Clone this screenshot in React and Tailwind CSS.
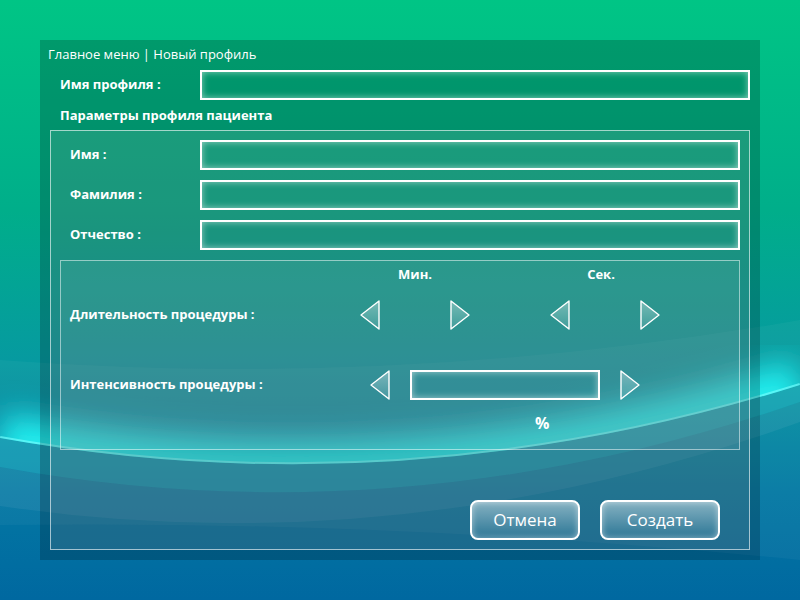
import React from "react";

const font = { fontFamily: '"Open Sans", "Noto Sans", sans-serif' };

function Arrow({ dir = "left" }) {
  const pts = dir === "left" ? "19,1 1,15 19,29" : "1,1 19,15 1,29";
  return (
    <svg width="20" height="30" viewBox="0 0 20 30" className="shrink-0">
      <defs>
        <linearGradient id={`ag-${dir}`} x1="0" y1="0" x2="0" y2="1">
          <stop offset="0" stopColor="#fff" stopOpacity="0.35" />
          <stop offset="1" stopColor="#fff" stopOpacity="0.08" />
        </linearGradient>
      </defs>
      <polygon
        points={pts}
        fill={`url(#ag-${dir})`}
        stroke="#fff"
        strokeWidth="1.4"
        strokeLinejoin="round"
      />
    </svg>
  );
}

function Field({ className = "" }) {
  return (
    <div
      className={`h-[30px] border-2 border-white shadow-[inset_0_0_7px_rgba(255,255,255,0.55)] ${className}`}
    />
  );
}

// wallpaper swoosh
function Background() {
  const edge = "M0,438 Q400,510 800,385";
  return (
    <svg className="absolute inset-0" width="800" height="600" viewBox="0 0 800 600">
      <defs>
        <linearGradient id="bg" x1="0" y1="0" x2="0" y2="1">
          <stop offset="0" stopColor="#00c585" />
          <stop offset="0.35" stopColor="#00ae8a" />
          <stop offset="0.6" stopColor="#069aa0" />
          <stop offset="0.82" stopColor="#0378a3" />
          <stop offset="1" stopColor="#0068a0" />
        </linearGradient>
        <clipPath id="above">
          <path d="M0,0 L800,0 L800,385 Q400,510 0,438 Z" />
        </clipPath>
        <filter id="soft" x="-20%" y="-50%" width="140%" height="200%">
          <feGaussianBlur stdDeviation="15" />
        </filter>
      </defs>
      <rect width="800" height="600" fill="url(#bg)" />
      <path d="M0,360 Q400,390 800,320 L800,560 Q400,520 0,525 Z" fill="#ffffff" opacity="0.04" />
      <g clipPath="url(#above)">
        <path d={edge} stroke="#22f0f0" strokeWidth="50" fill="none" filter="url(#soft)" />
        <path d={edge} stroke="#6ffcfc" strokeWidth="4" fill="none" opacity="0.7" />
      </g>
      <path d="M0,438 Q400,510 800,385 L800,402 Q400,540 0,467 Z" fill="#3fd6e0" opacity="0.28" />
      <path d="M0,467 Q400,540 800,402 L800,422 Q400,565 0,506 Z" fill="#ffffff" opacity="0.06" />
    </svg>
  );
}

export default function App() {
  return (
    <div className="relative w-[800px] h-[600px] overflow-hidden text-white" style={font}>
      <Background />
      <div className="relative m-10 w-[720px] h-[520px] bg-black/20 flex flex-col">
        <div className="pt-1 pl-2 text-[13px] leading-5">Главное меню | Новый профиль</div>

        <div className="mt-[6px] flex items-center">
          <div className="w-[160px] pl-5 text-[13px] font-bold">Имя профиля :</div>
          <Field className="w-[550px]" />
        </div>

        <div className="mt-[6px] pl-5 text-[13px] font-bold leading-[18px]">
          Параметры профиля пациента
        </div>

        <div className="mt-[6px] mx-[10px] h-[420px] border border-white/60 bg-white/10 flex flex-col pt-[9px]">
          {["Имя :", "Фамилия :", "Отчество :"].map((l, i) => (
            <div key={l} className={`flex items-center ${i ? "mt-[10px]" : ""}`}>
              <div className="w-[149px] pl-[19px] text-[13px] font-bold">{l}</div>
              <Field className="w-[540px]" />
            </div>
          ))}

          <div className="mt-[10px] ml-[9px] w-[680px] h-[190px] border border-white/50 bg-white/[0.07] flex flex-col pt-[4px]">
            <div className="flex text-[13px] font-bold leading-[18px]">
              <div className="w-[299px]" />
              <div className="w-[110px] text-center">Мин.</div>
              <div className="w-[76px]" />
              <div className="w-[110px] text-center">Сек.</div>
            </div>

            <div className="mt-[17px] flex items-center">
              <div className="w-[299px] pl-[9px] text-[13px] font-bold">Длительность процедуры :</div>
              <Arrow dir="left" />
              <div className="w-[70px]" />
              <Arrow dir="right" />
              <div className="w-[80px]" />
              <Arrow dir="left" />
              <div className="w-[70px]" />
              <Arrow dir="right" />
            </div>

            <div className="mt-[40px] flex items-center">
              <div className="w-[309px] pl-[9px] text-[13px] font-bold">Интенсивность процедуры :</div>
              <Arrow dir="left" />
              <Field className="ml-5 w-[190px]" />
              <div className="w-5" />
              <Arrow dir="right" />
            </div>

            <div className="mt-[13px] pl-[474px] text-[16px] font-bold leading-5">%</div>
          </div>

          <div className="mt-[50px] flex justify-end gap-5 pr-[29px]">
            {[["Отмена", "w-[110px]"], ["Создать", "w-[120px]"]].map(([t, w]) => (
              <button
                key={t}
                className={`${w} h-10 rounded-lg border-2 border-white bg-gradient-to-b from-white/45 to-white/5 shadow-[inset_0_0_6px_rgba(255,255,255,0.5)] text-[17px] text-white`}
                style={font}
              >
                {t}
              </button>
            ))}
          </div>
        </div>
      </div>
    </div>
  );
}
